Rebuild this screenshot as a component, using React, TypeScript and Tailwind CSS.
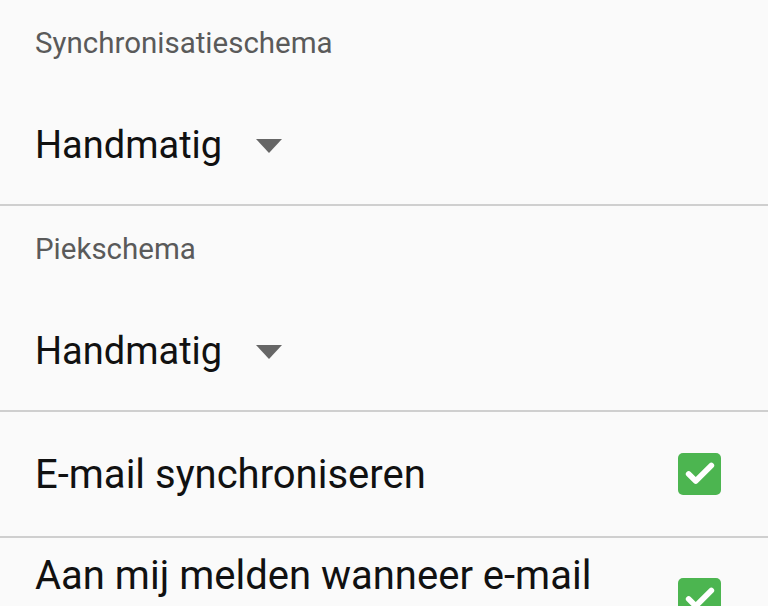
import { Check } from 'lucide-react';

function Dropdown({ label, value }: { label: string; value: string }) {
  return (
    <div className="h-[206px] border-b-2 border-[#cfcfcf] px-[35px] flex flex-col">
      <div className="pt-[24px] text-[29.5px] leading-[38px] text-[#5a5a5a]">{label}</div>
      <div className="mt-[60px] flex items-center">
        <span className="text-[38px] leading-[46px] text-[#111]">{value}</span>
        <svg width="26" height="14" viewBox="0 0 26 14" className="ml-[34px] mt-[2px]">
          <path d="M0 0 L26 0 L13 14 Z" fill="#666" />
        </svg>
      </div>
    </div>
  );
}

function CheckBox({ className }: { className?: string }) {
  return (
    <div className={`w-[43px] h-[42px] rounded-[5px] bg-[#4cb550] flex items-center justify-center ${className ?? ''}`}>
      <Check size={34} strokeWidth={4} className="text-white" />
    </div>
  );
}

export default function App() {
  return (
    <div
      className="w-[768px] h-[606px] overflow-hidden bg-[#fafafa]"
      style={{ fontFamily: 'Roboto, "Noto Sans", sans-serif' }}
    >
      <Dropdown label="Synchronisatieschema" value="Handmatig" />
      <Dropdown label="Piekschema" value="Handmatig" />
      <div className="h-[126px] flex items-center justify-between pl-[35px] pr-[47px] border-b-2 border-[#cfcfcf]">
        <span className="text-[40px] leading-[46px] text-[#111] mt-[2px]">E-mail synchroniseren</span>
        <CheckBox />
      </div>
      <div className="flex justify-between pl-[35px] pr-[47px] pt-[15px]">
        <span className="text-[40px] leading-[46px] text-[#111]">Aan mij melden wanneer e-mail</span>
        <CheckBox className="mt-[25px]" />
      </div>
    </div>
  );
}
